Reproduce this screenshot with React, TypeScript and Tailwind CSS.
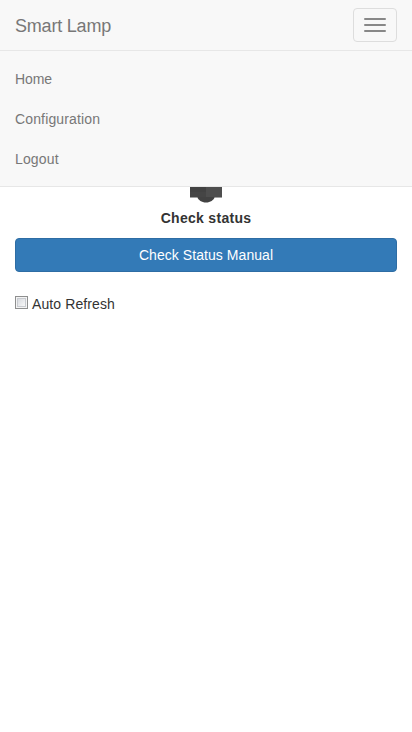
export default function App() {
  return (
    <div className="min-h-screen bg-white font-['Liberation_Sans',Arial,sans-serif] text-sm leading-5 text-[#333]">
      <nav className="h-[187px] border-b border-[#e7e7e7] bg-[#f8f8f8] text-[#777]">
        <div className="flex h-[50px] items-center justify-between px-[15px]">
          <a className="pt-0.5 text-lg leading-5 tracking-[-0.2px]">Smart Lamp</a>
          <button aria-label="Toggle navigation" className="flex h-[34px] w-11 flex-col items-center justify-center gap-1 rounded border border-[#ddd]">
            <span className="h-0.5 w-[22px] rounded-[1px] bg-[#888]" />
            <span className="h-0.5 w-[22px] rounded-[1px] bg-[#888]" />
            <span className="h-0.5 w-[22px] rounded-[1px] bg-[#888]" />
          </button>
        </div>
        <ul className="border-t border-[#e7e7e7] px-[15px] pt-2">
          <li className="py-2.5 tracking-[-0.1px]">Home</li>
          <li className="py-2.5 tracking-[0.14px]">Configuration</li>
          <li className="py-2.5 tracking-[0.14px]">Logout</li>
        </ul>
      </nav>
      <main className="px-[15px]">
        <svg className="mx-auto block" width="32" height="16" viewBox="0 0 32 16">
          <path d="M7 10H25C23.500 13 20.500 15.500 16 15.500S8.500 13 7 10Z" fill="#424242" />
          <path d="M0 0H16V10H0Z" fill="#424242" />
          <path d="M16 0H32V10H16Z" fill="#4e4e4e" />
          <path d="M0 5H16V10H0Z" fill="#454545" />
          <path d="M0 10H7V11H0ZM25 10H32V11H25Z" fill="#a0a0a0" />
        </svg>
        <p className="mt-[5px] text-center font-bold tracking-[0.3px]">Check status</p>
        <button className="mt-2.5 h-[34px] w-full rounded border border-[#2e6da4] bg-[#337ab7] tracking-[0.06px] text-white">Check Status Manual</button>
        <label className="mt-[22px] flex items-start gap-1 tracking-[0.1px]">
          <span className="mt-0.5 h-[13px] w-[13px] border border-[#8e8f8f] bg-[#f4f4f4] p-px">
            <span className="block h-full w-full border border-[#c8cbd0] bg-gradient-to-br from-[#d8dbe0] to-[#f8f8f8]" />
          </span>
          Auto Refresh
        </label>
      </main>
    </div>
  );
}
